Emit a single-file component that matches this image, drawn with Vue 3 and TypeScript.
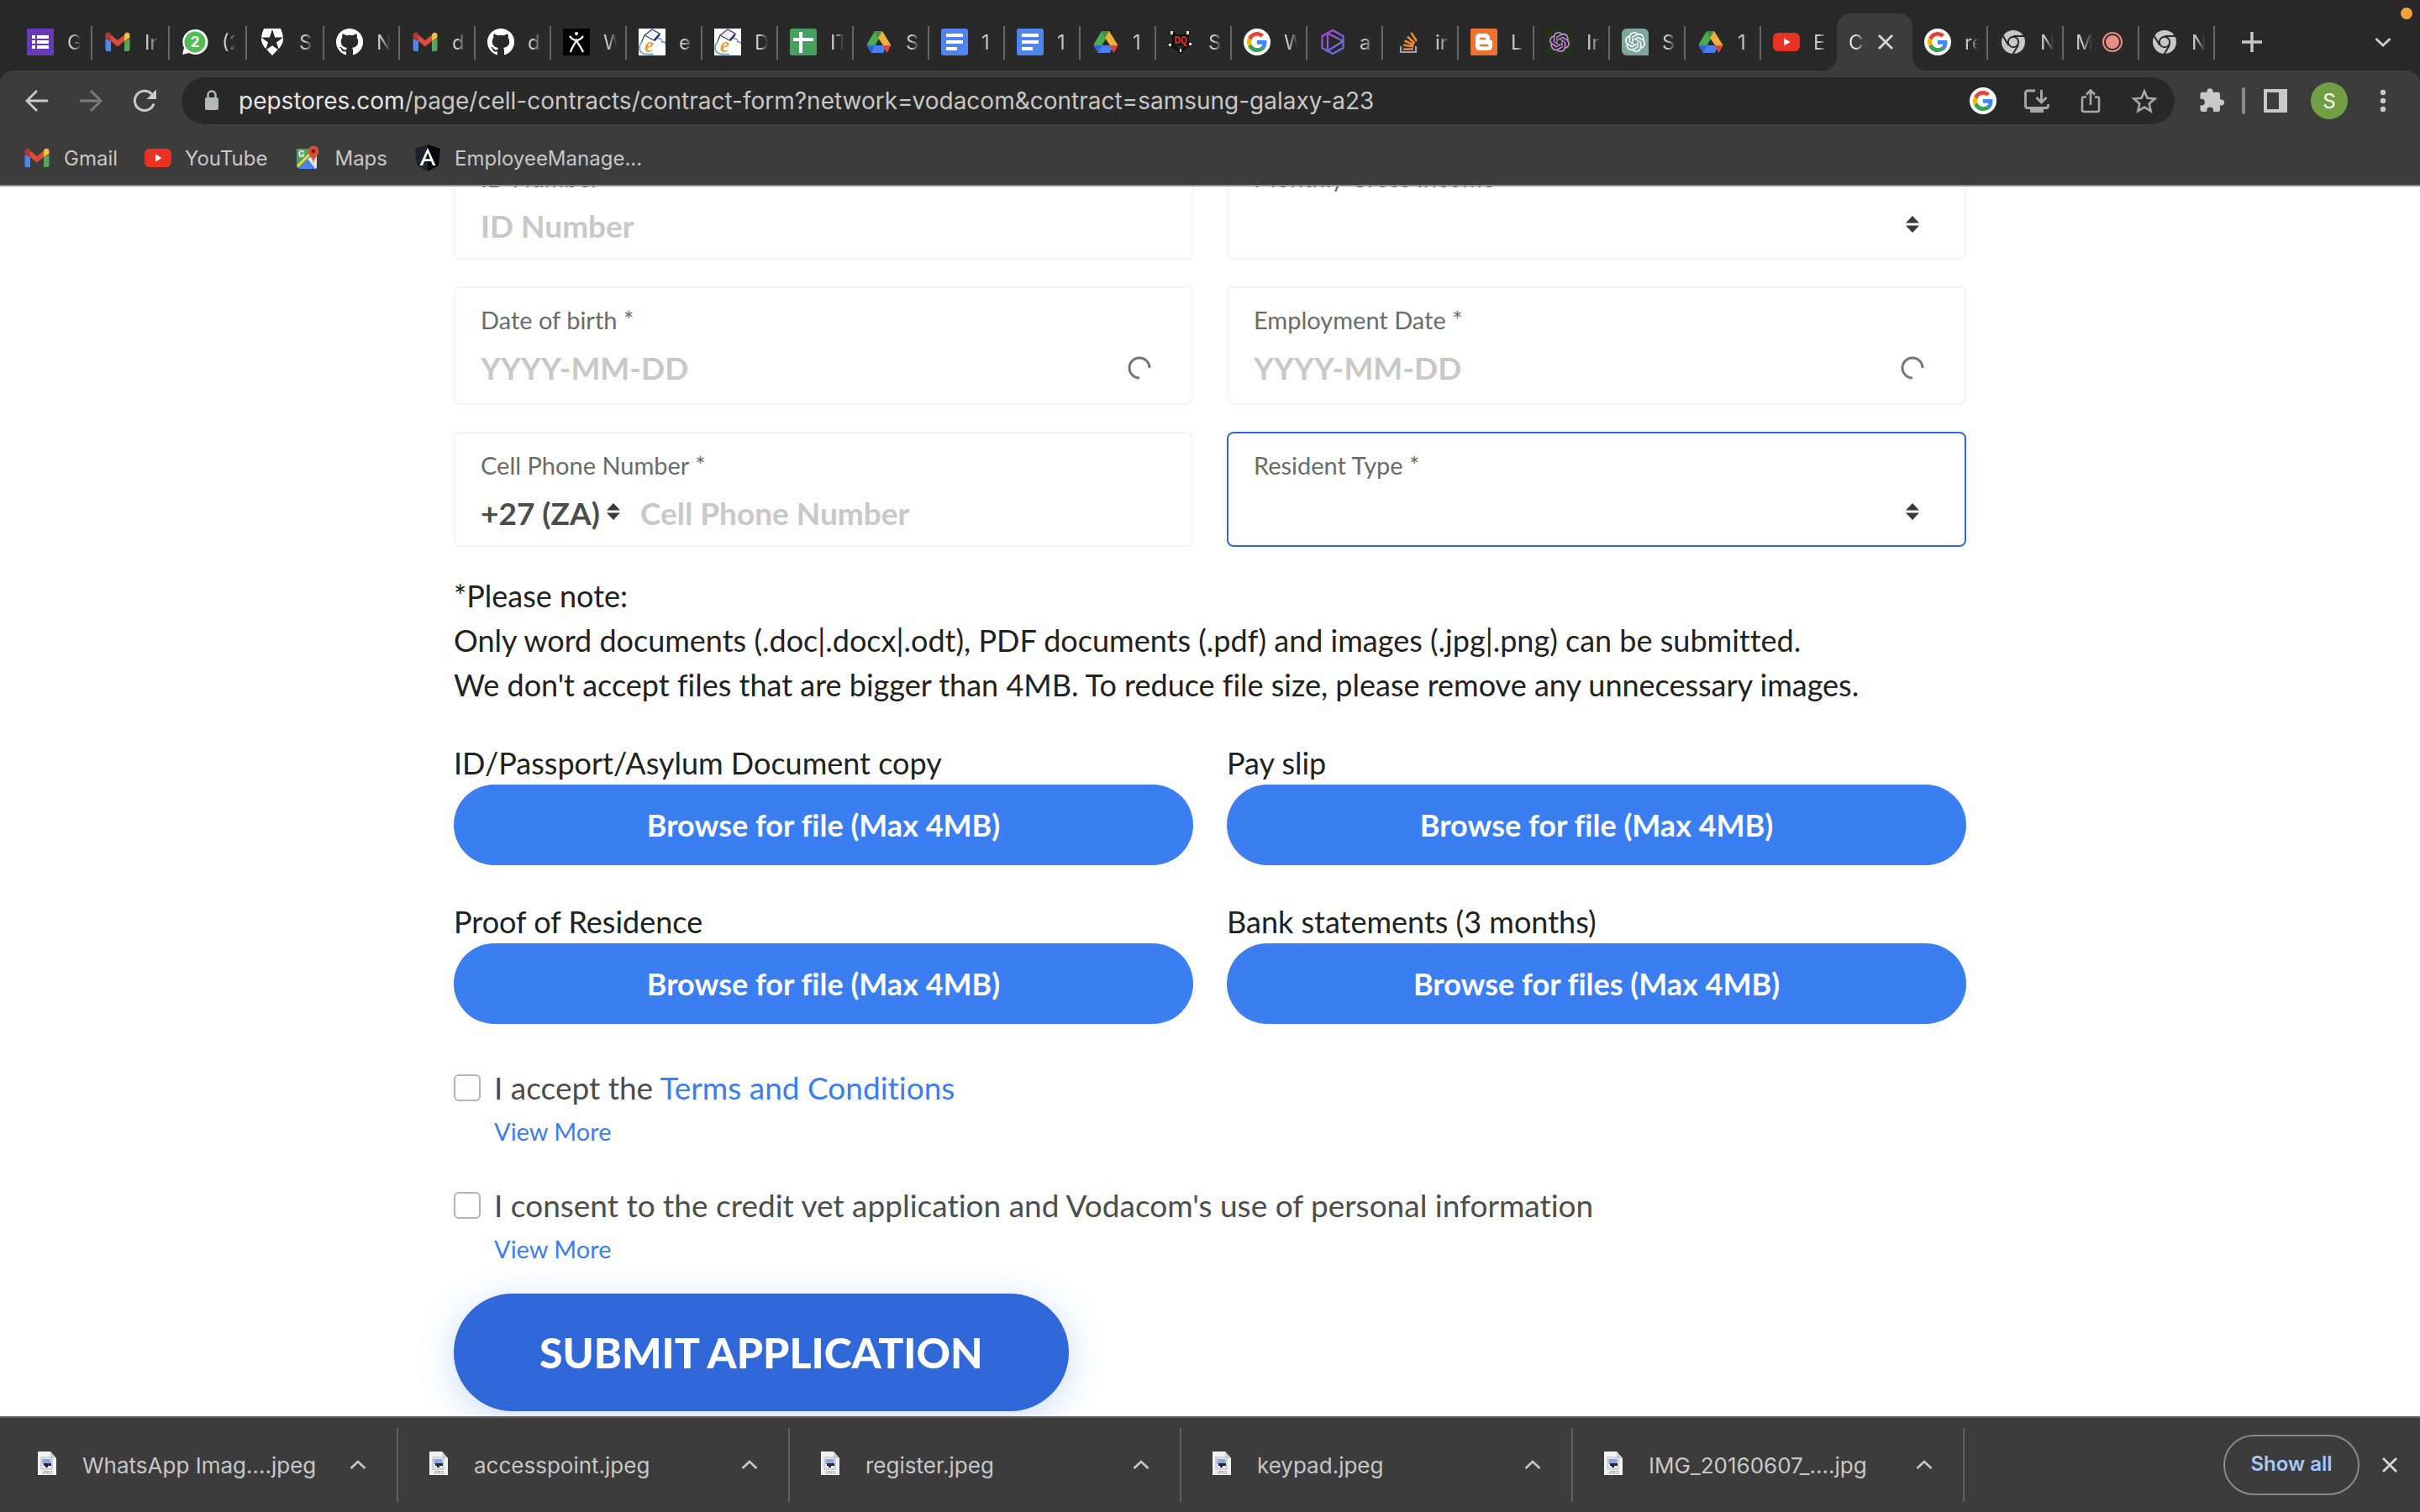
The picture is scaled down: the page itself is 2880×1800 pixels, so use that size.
<script setup lang="ts">
import { ref } from 'vue'

interface Tab {
  icon?: string
  title: string
  wide?: boolean
  active?: boolean
  recording?: boolean
}

const gLogo = `<g transform="translate(4 4)">
    <path fill="#4285f4" d="M23.500 12.300c0-.9-.1-1.600-.2-2.300H12v4.700h6.500a5.600 5.600 0 0 1-2.400 3.600v3h3.900c2.200-2.100 3.500-5.200 3.500-9z"/>
    <path fill="#34a353" d="M12 24c3.200 0 6-1.100 8-2.900l-3.900-3a7.200 7.200 0 0 1-10.800-3.800H1.300v3.100A12 12 0 0 0 12 24z"/>
    <path fill="#f6b704" d="M5.300 14.300a7 7 0 0 1 0-4.600V6.600h-4a12 12 0 0 0 0 10.800z"/>
    <path fill="#e54335" d="M12 4.800c1.800 0 3.300.6 4.600 1.800L20 3.200A12 12 0 0 0 1.300 6.600l4 3.100A7.200 7.200 0 0 1 12 4.800z"/>
  </g>`

const knot = (color: string): string =>
  `<path transform="translate(4 4)" fill="${color}" d="M22.2819 9.8211a5.9847 5.9847 0 0 0-.5157-4.9108 6.0462 6.0462 0 0 0-6.5098-2.9A6.0651 6.0651 0 0 0 4.9807 4.1818a5.9847 5.9847 0 0 0-3.9977 2.9 6.0462 6.0462 0 0 0 .7427 7.0966 5.98 5.98 0 0 0 .511 4.9107 6.051 6.051 0 0 0 6.5146 2.9001A5.9847 5.9847 0 0 0 13.2599 24a6.0557 6.0557 0 0 0 5.7718-4.2058 5.9894 5.9894 0 0 0 3.9977-2.9001 6.0557 6.0557 0 0 0-.7475-7.0729zm-9.022 12.6081a4.4755 4.4755 0 0 1-2.8764-1.0408l.1419-.0804 4.7783-2.7582a.7948.7948 0 0 0 .3927-.6813v-6.7369l2.02 1.1686a.071.071 0 0 1 .038.052v5.5826a4.504 4.504 0 0 1-4.4945 4.4944zm-9.6607-4.1254a4.4708 4.4708 0 0 1-.5346-3.0137l.142.0852 4.783 2.7582a.7712.7712 0 0 0 .7806 0l5.8428-3.3685v2.3324a.0804.0804 0 0 1-.0332.0615L9.74 19.9502a4.4992 4.4992 0 0 1-6.1408-1.6464zM2.3408 7.8956a4.485 4.485 0 0 1 2.3655-1.9728V11.6a.7664.7664 0 0 0 .3879.6765l5.8144 3.3543-2.0201 1.1685a.0757.0757 0 0 1-.071 0l-4.8303-2.7865A4.504 4.504 0 0 1 2.3408 7.872zm16.5963 3.8558L13.1038 8.364 15.1192 7.2a.0757.0757 0 0 1 .071 0l4.8303 2.7913a4.4944 4.4944 0 0 1-.6765 8.1042v-5.6772a.79.79 0 0 0-.407-.667zm2.0107-3.0231l-.142-.0852-4.7735-2.7818a.7759.7759 0 0 0-.7854 0L9.409 9.2297V6.8974a.0662.0662 0 0 1 .0284-.0615l4.8303-2.7866a4.4992 4.4992 0 0 1 6.6802 4.66zM8.3065 12.863l-2.02-1.1638a.0804.0804 0 0 1-.038-.0567V6.0742a4.4992 4.4992 0 0 1 7.3757-3.4537l-.142.0805L8.704 5.459a.7948.7948 0 0 0-.3927.6813zm1.0976-2.3654l2.602-1.4998 2.6069 1.4998v2.9994l-2.5974 1.4997-2.6067-1.4997Z"/>`

const icons: Record<string, string> = {
  forms: `<path fill="#673ab7" d="M0 0h32v32H0z"/><path fill="#fff" d="M6 8h4v4H6zM12 8h14v4H12zM6 14h4v4H6zM12 14h14v4H12zM6 20h4v4H6zM12 20h14v4H12z"/>`,
  gmail: `<path fill="#4f86ec" d="M1.500 12v13a2.500 2.500 0 0 0 2.500 2h4V15z"/><path fill="#58a55c" d="M30.500 12v13a2.500 2.500 0 0 1-2.500 2h-4V15z"/><path fill="#f1bf42" d="M24 7.500V15l6.500-4V8c0-3-3.500-4-5.500-2.400z"/><path fill="#b43a30" d="M8 7.500V15l-6.500-4V8c0-3 3.500-4 5.500-2.400z"/><path fill="#db4b3e" d="M8 7.500l8 6.500 8-6.500V15l-8 6.500L8 15z"/>`,
  whatsapp: `<path fill="#fff" d="M16 1a15 15 0 1 1-7 28L1 31l2-8A15 15 0 0 1 16 1z"/><circle cx="16" cy="16" r="12.500" fill="#52bd5a"/><text x="16" y="22" text-anchor="middle" font-size="17" font-weight="700" font-family="Inter, sans-serif" fill="#fff">2</text>`,
  shield: `<path fill="#fff" d="M6 0h20c3 7 5 15-.5 22L16 32l-9.500-10C1 15 3 7 6 0z"/><path fill="#292929" d="M16 1l3.200 9.500H29l-8 6 3.200 9.500L16 20.200 7.800 26 11 16.500l-8-6h9.800z"/>`,
  github: `<path fill="#fff" d="M16 0a16 16 0 0 0-5 31.200c.8.1 1-.4 1-.8v-3c-4.400 1-5.400-2-5.400-2-.7-1.800-1.700-2.300-1.700-2.300-1.500-1 .1-1 .1-1 1.600.1 2.500 1.700 2.500 1.700 1.400 2.400 3.700 1.700 4.600 1.300.1-1 .6-1.700 1-2.100-3.500-.4-7.300-1.800-7.300-7.900 0-1.700.6-3.200 1.700-4.300-.2-.4-.7-2 .1-4.200 0 0 1.400-.4 4.400 1.600a15 15 0 0 1 8 0c3-2 4.400-1.600 4.400-1.600.9 2.200.3 3.800.2 4.200a6.200 6.200 0 0 1 1.600 4.300c0 6.100-3.700 7.500-7.300 7.900.6.500 1.100 1.500 1.100 3v4.400c0 .4.300.9 1.100.8A16 16 0 0 0 16 0z"/>`,
  figure: `<path fill="#000" d="M0 0h32v32H0z"/><circle cx="16" cy="6" r="2" fill="#fff"/><path d="M8 9c3 4 6 5 8 5s5-1 8-5M9 28c1-5 4-8 7-14 3 6 6 9 8 14" fill="none" stroke="#fff" stroke-width="2.200"/>`,
  scholar: `<rect width="32" height="32" fill="#fff"/><path d="M7 8l9-7 9 5-7 8z" fill="#eef0f6" stroke="#3a4470" stroke-width="1.300"/><path fill="#1f2a50" d="M18 14l7-8 .5 2-6 7z"/><path d="M7 8L4 15" stroke="#3a4470" stroke-width="1.300"/><path d="M5 15c-5 4-5 11-1 14 2 2 8 1.500 14 1.500M22 12c4-1 6 1 6 4 2-1 3 0 4 2" stroke="#4d94cc" stroke-width="1.400" fill="none"/><text x="7" y="28" font-size="25" font-style="italic" font-weight="700" font-family="Liberation Serif, serif" fill="#e0a440">e</text>`,
  sheets: `<rect width="32" height="32" rx="3" fill="#48a060"/><path fill="#fff" d="M11 4h4v7h13v4H15v14h-4V15H4v-4h7z"/>`,
  drive: `<path fill="#4caa50" d="M11 3l5 9-9 16L1.500 19z"/><path fill="#3f8f45" d="M11 3h9l-4 9z"/><path fill="#f0b03c" d="M20 3l10.500 17H21l-6-9z"/><path fill="#4b80ec" d="M7 20h18l-4 9H7l-5-8z"/><path fill="#2f64d6" d="M1.500 20h10L7 29z"/><path fill="#db4a38" d="M20.500 20h10L25.500 29z"/>`,
  docs: `<rect width="32" height="32" rx="3" fill="#5085ee"/><path fill="#fff" d="M6 6h20v4H6zM6 14h20v4H6zM6 22h13v4H6z"/>`,
  dq: `<path fill="none" stroke="#111" stroke-width="3.500" d="M4 4l6 5h10l5-5M3 19l5 3 7 6 6-6 6-3"/><path fill="#141010" d="M5 7h20v13H5z"/><text x="15" y="18" text-anchor="middle" font-size="13" font-weight="700" font-family="Liberation Mono, monospace" fill="#d22f2f">DQ</text><path fill="#ddd" d="M3 3h3v4H3zM22 3h3v4h-3zM1 18h3v3H1zM25 17h3v3h-3zM14 24h2v4h-2z"/>`,
  google: `<circle cx="16" cy="16" r="16" fill="#fff"/>${gLogo}`,
  hexagon: `<defs><linearGradient id="hex" x1="0" y1="0" x2="1" y2="1"><stop offset="0" stop-color="#b943d8"/><stop offset="1" stop-color="#4b80dd"/></linearGradient></defs><path fill="none" stroke="url(#hex)" stroke-width="2.200" d="M16 2l12.500 7v14L16 30 3.500 23V9zM10 5.500v21L28.500 15 10 5.500"/>`,
  stack: `<path d="M7 21v7h18v-7" fill="none" stroke="#9aa4ad" stroke-width="2.200"/><g stroke="#e8873a" stroke-width="2.600"><path d="M10 24.500h12M10.200 19.500l12 2M11.500 14.500l11.200 5M15 9.500l8.500 8M19.500 5l6.500 10"/></g>`,
  blogger: `<rect width="32" height="32" rx="2" fill="#ee7330"/><path fill="#fff" d="M11 6h6c4 0 6 2 6 5.500 0 2 .5 2.500 1.500 2.500 1 0 1.500.5 1.500 1.500V21c0 3-2 5-5 5H11c-3 0-5-2-5-5V11c0-3 2-5 5-5z"/><path d="M12 12h5M12 20h8" stroke="#ee7330" stroke-width="2.600" stroke-linecap="round"/>`,
  openai: `<path fill="#1f3317" d="M0 0h32v32H0z"/>${knot('#d884ef')}`,
  chatgpt: `<path fill="#7fa89c" d="M6 0h20a6 6 0 0 1 6 6v26H6a6 6 0 0 1-6-6V6a6 6 0 0 1 6-6z"/>${knot('#fff')}`,
  youtube: `<rect x="0" y="5" width="32" height="22" rx="6" fill="#e93223"/><path fill="#fff" d="M13 11.500l7.500 4.500-7.500 4.500z"/>`,
  chrome: `<circle cx="16" cy="16" r="14" fill="#c7c7c7"/><circle cx="16" cy="16" r="6.200" fill="#c7c7c7" stroke="#292929" stroke-width="2"/><path d="M16 9h13M10 19.500L3.500 8.500M22 19.500L15.500 30.500" stroke="#292929" stroke-width="2"/>`,
  record: `<circle cx="16" cy="16" r="11" fill="none" stroke="#e88d84" stroke-width="2"/><circle cx="16" cy="16" r="8" fill="#e88d84"/>`,
  close: `<path d="M8 8l16 16M24 8L8 24" stroke="#d6d6d6" stroke-width="2.800"/>`,
  plus: `<path d="M16 4v24M4 16h24" stroke="#c9c9c9" stroke-width="3.400"/>`,
  chevron: `<path d="M7.500 12l8.500 8 8.500-8" fill="none" stroke="#c9c9c9" stroke-width="3"/>`,
  caret: `<path d="M7.500 20l8.500-8 8.500 8" fill="none" stroke="#c9c9c9" stroke-width="2.600"/>`,
  back: `<path d="M29 16H4M16 4L4 16l12 12" fill="none" stroke="#c9c9c9" stroke-width="2.800"/>`,
  forward: `<path d="M3 16h25M16 4l12 12-12 12" fill="none" stroke="#7d7d7d" stroke-width="2.800"/>`,
  reload: `<path d="M27 19.500A11.600 11.600 0 1 1 24.500 8" fill="none" stroke="#c9c9c9" stroke-width="3"/><path fill="#c9c9c9" d="M30 2.500v11.500H18.500z"/>`,
  lock: `<rect x="8" y="12" width="16" height="15" rx="2" fill="#b4b8bd"/><path d="M11.500 13v-4a4.500 4.500 0 0 1 9 0v4" fill="none" stroke="#b4b8bd" stroke-width="2.400"/>`,
  install: `<path d="M14 4H5a2.500 2.500 0 0 0-2.500 2.500V22A2.500 2.500 0 0 0 5 24.500h22a2.500 2.500 0 0 0 2.500-2.500v-2" fill="none" stroke="#a8a8a8" stroke-width="2.800"/><path d="M21.500 3v14M15.500 12l6 6 6-6" fill="none" stroke="#a8a8a8" stroke-width="2.800"/><path fill="#a8a8a8" d="M8 25h16v5H8z"/>`,
  share: `<path d="M11 11.500H8A2 2 0 0 0 6 13.500V27a2 2 0 0 0 2 2h16a2 2 0 0 0 2-2V13.500a2 2 0 0 0-2-2h-3M16 21V4M11 8.500l5-5 5 5" fill="none" stroke="#a8a8a8" stroke-width="2.600"/>`,
  star: `<path d="M16 4.500l3.500 8.300 9 .8-6.800 5.900 2 8.800-7.700-4.700-7.700 4.700 2-8.800-6.800-5.900 9-.8z" fill="none" stroke="#a8a8a8" stroke-width="2.600"/>`,
  puzzle: `<path fill="#c9c9c9" d="M27.500 14.500H26v-6A2.800 2.800 0 0 0 23.200 5.700H17.500V4a3.600 3.600 0 0 0-7 0v1.700H5.300A2.800 2.800 0 0 0 2.500 8.500v5.200H4a3.900 3.900 0 0 1 0 7.800H2.500v5A2.800 2.800 0 0 0 5.300 29h5v-1.500a3.900 3.900 0 0 1 7.800 0V29h5.100a2.800 2.800 0 0 0 2.800-2.800v-4.700h1.500a3.500 3.500 0 0 0 0-7z"/>`,
  panel: `<path fill="#c9c9c9" fill-rule="evenodd" d="M2 2h28v28H2zM6 6v20h14V6z"/>`,
  dots: `<g fill="#c9c9c9"><circle cx="16" cy="6" r="3.200"/><circle cx="16" cy="16" r="3.200"/><circle cx="16" cy="26" r="3.200"/></g>`,
  maps: `<path fill="#4fa65a" d="M3 5h18v23H5a2 2 0 0 1-2-2z"/><path fill="#4d83ea" d="M5 29l11-11 11 11z"/><path fill="#e8e8e8" d="M16 17l11-6v16a2 2 0 0 1-1.500 2z"/><path stroke="#f4d04b" stroke-width="3" d="M4 26L21 9"/><text x="5" y="15" font-size="10" font-weight="700" font-family="Inter, sans-serif" fill="#fff">G</text><path fill="#d5503f" d="M23 1.500a6.500 6.500 0 0 1 6.500 6.500c0 5-5 6-6.500 14-1.500-8-6.500-9-6.500-14A6.500 6.500 0 0 1 23 1.500z"/><circle cx="23" cy="8" r="2.400" fill="#7c2019"/>`,
  angular: `<path fill="#1d222b" d="M16 0L1 5l2 20 13 7z"/><path fill="#05070c" d="M16 0l15 5-2 20-13 7z"/><path fill="#fff" fill-rule="evenodd" d="M16 4l9.500 21H22l-2-5h-8l-2 5H6.500zM16 10l-3 7.200h6z"/>`,
  jpeg: `<path fill="#f2f2f2" d="M5 0h15l7 8v20H5z"/><path fill="#cfcfcf" d="M20 0l7 8h-7z"/><rect x="9" y="7" width="13" height="14" fill="#e4e9f1" stroke="#b5b5b5"/><path fill="#86a8e6" d="M10.500 9h10v6h-10z"/><path fill="#23283a" d="M12 14h9v3h-4v2h-3v-2h-2z"/><text x="16" y="27" text-anchor="middle" font-size="5" font-family="Inter, sans-serif" fill="#888">JPEG</text>`,
  sort: `<path fill="#343a40" d="M8 13.500L16 5l8 8.500zM8 16.500h16L16 25z"/>`,
  spinner: `<path d="M28 17A12 12 0 1 0 16 29" fill="none" stroke="#777" stroke-width="3"/>`,
}

const tabs: Tab[] = [
  { icon: 'forms', title: 'G', wide: true },
  { icon: 'gmail', title: 'In', wide: true },
  { icon: 'whatsapp', title: '(2', wide: true },
  { icon: 'shield', title: 'S', wide: true },
  { icon: 'github', title: 'N' },
  { icon: 'gmail', title: 'd' },
  { icon: 'github', title: 'd' },
  { icon: 'figure', title: 'W' },
  { icon: 'scholar', title: 'e' },
  { icon: 'scholar', title: 'D' },
  { icon: 'sheets', title: 'IT' },
  { icon: 'drive', title: 'S' },
  { icon: 'docs', title: '1' },
  { icon: 'docs', title: '1' },
  { icon: 'drive', title: '1' },
  { icon: 'dq', title: 'S' },
  { icon: 'google', title: 'W' },
  { icon: 'hexagon', title: 'a' },
  { icon: 'stack', title: 'in' },
  { icon: 'blogger', title: 'L' },
  { icon: 'openai', title: 'In' },
  { icon: 'chatgpt', title: 'S' },
  { icon: 'drive', title: '1' },
  { icon: 'youtube', title: 'E' },
  { title: 'Co', active: true },
  { icon: 'google', title: 're' },
  { icon: 'chrome', title: 'N' },
  { title: 'M', recording: true },
  { icon: 'chrome', title: 'N' },
]

const bookmarks = [
  { icon: 'gmail', label: 'Gmail' },
  { icon: 'youtube', label: 'YouTube' },
  { icon: 'maps', label: 'Maps' },
  { icon: 'angular', label: 'EmployeeManage...' },
]

const uploads = [
  { id: 'id-copy', label: 'ID/Passport/Asylum Document copy', action: 'Browse for file (Max 4MB)' },
  { id: 'pay-slip', label: 'Pay slip', action: 'Browse for file (Max 4MB)' },
  { id: 'residence', label: 'Proof of Residence', action: 'Browse for file (Max 4MB)' },
  { id: 'bank', label: 'Bank statements (3 months)', action: 'Browse for files (Max 4MB)' },
]

const downloads = [
  'WhatsApp Imag....jpeg',
  'accesspoint.jpeg',
  'register.jpeg',
  'keypad.jpeg',
  'IMG_20160607_....jpg',
]

const accepted = ref(false)
const consented = ref(false)
</script>

<template>
  <div class="browser">
    <header>
      <nav class="tabstrip" aria-label="Tabs">
        <div
          v-for="(tab, i) in tabs"
          :key="i"
          class="tab"
          :class="{ wide: tab.wide, active: tab.active, plain: tab.active || tabs[i + 1]?.active }"
        >
          <svg v-if="tab.icon" class="icon" viewBox="0 0 32 32" v-html="icons[tab.icon]" />
          <span class="tab-title" :class="{ roomy: !tab.icon }">{{ tab.title }}</span>
          <button v-if="tab.active" class="icon-button" aria-label="Close tab">
            <svg class="icon" viewBox="0 0 32 32" v-html="icons.close" />
          </button>
          <svg v-if="tab.recording" class="icon" viewBox="0 0 32 32" v-html="icons.record" />
        </div>
        <button class="icon-button new-tab" aria-label="New tab">
          <svg class="icon" viewBox="0 0 32 32" v-html="icons.plus" />
        </button>
        <button class="icon-button tab-search" aria-label="Search tabs">
          <svg class="icon" viewBox="0 0 32 32" v-html="icons.chevron" />
        </button>
        <span class="mic-dot"></span>
      </nav>

      <div class="toolbar">
        <button class="icon-button" aria-label="Back"><svg class="icon" viewBox="0 0 32 32" v-html="icons.back" /></button>
        <button class="icon-button" aria-label="Forward"><svg class="icon" viewBox="0 0 32 32" v-html="icons.forward" /></button>
        <button class="icon-button" aria-label="Reload"><svg class="icon" viewBox="0 0 32 32" v-html="icons.reload" /></button>
        <div class="omnibox">
          <svg class="icon" viewBox="0 0 32 32" v-html="icons.lock" />
          <div class="url"><span class="host">pepstores.com</span>/page/cell-contracts/contract-form?network=vodacom&amp;contract=samsung-galaxy-a23</div>
          <button
            v-for="name in ['google', 'install', 'share', 'star']"
            :key="name"
            class="icon-button"
            :aria-label="name"
          >
            <svg class="icon" viewBox="0 0 32 32" v-html="icons[name]" />
          </button>
        </div>
        <div class="actions">
          <button class="icon-button" aria-label="Extensions"><svg class="icon" viewBox="0 0 32 32" v-html="icons.puzzle" /></button>
          <span class="divider"></span>
          <button class="icon-button" aria-label="Side panel"><svg class="icon" viewBox="0 0 32 32" v-html="icons.panel" /></button>
          <button class="avatar">S</button>
          <button class="icon-button" aria-label="Menu"><svg class="icon" viewBox="0 0 32 32" v-html="icons.dots" /></button>
        </div>
      </div>

      <nav class="bookmarks" aria-label="Bookmarks">
        <a v-for="b in bookmarks" :key="b.label" href="#" class="bookmark">
          <svg class="icon" viewBox="0 0 32 32" v-html="icons[b.icon]" />
          <span>{{ b.label }}</span>
        </a>
      </nav>
    </header>

    <main class="page">
      <form class="form" @submit.prevent>
        <div class="fields">
          <div class="field">
            <label for="id-number">ID Number *</label>
            <input id="id-number" type="text" placeholder="ID Number" />
          </div>
          <div class="field">
            <label for="income">Monthly Gross Income *</label>
            <div class="control">
              <select id="income"><option></option></select>
              <svg class="icon" viewBox="0 0 32 32" v-html="icons.sort" />
            </div>
          </div>
          <div class="field date">
            <label for="birth">Date of birth *</label>
            <div class="control">
              <input id="birth" type="text" placeholder="YYYY-MM-DD" />
              <svg class="icon" viewBox="0 0 32 32" v-html="icons.spinner" />
            </div>
          </div>
          <div class="field date">
            <label for="employed">Employment Date *</label>
            <div class="control">
              <input id="employed" type="text" placeholder="YYYY-MM-DD" />
              <svg class="icon" viewBox="0 0 32 32" v-html="icons.spinner" />
            </div>
          </div>
          <div class="field">
            <label for="phone">Cell Phone Number *</label>
            <div class="control">
              <select class="country" aria-label="Country code"><option>+27 (ZA)</option></select>
              <svg class="icon" viewBox="0 0 32 32" v-html="icons.sort" />
              <input id="phone" class="phone" type="tel" placeholder="Cell Phone Number" />
            </div>
          </div>
          <div class="field focused">
            <label for="resident">Resident Type *</label>
            <div class="control">
              <select id="resident"><option></option></select>
              <svg class="icon" viewBox="0 0 32 32" v-html="icons.sort" />
            </div>
          </div>
        </div>

        <p class="note">
          *Please note:<br />
          Only word documents (.doc|.docx|.odt), PDF documents (.pdf) and images (.jpg|.png) can be submitted.<br />
          We don't accept files that are bigger than 4MB. To reduce file size, please remove any unnecessary images.
        </p>

        <div class="uploads">
          <div v-for="u in uploads" :key="u.id" class="upload">
            <label :for="u.id">{{ u.label }}</label>
            <button :id="u.id" type="button">{{ u.action }}</button>
          </div>
        </div>

        <div class="consents">
          <div class="consent">
            <input id="terms" v-model="accepted" type="checkbox" />
            <div>
              <div class="consent-text"><label for="terms">I accept the </label><a href="#">Terms and Conditions</a></div>
              <a href="#" class="more">View More</a>
            </div>
          </div>
          <div class="consent">
            <input id="vet" v-model="consented" type="checkbox" />
            <div>
              <div class="consent-text"><label for="vet">I consent to the credit vet application and Vodacom's use of personal information</label></div>
              <a href="#" class="more">View More</a>
            </div>
          </div>
        </div>

        <button class="submit" type="submit">SUBMIT APPLICATION</button>
      </form>
    </main>

    <footer class="shelf">
      <div v-for="name in downloads" :key="name" class="download">
        <svg class="icon" viewBox="0 0 32 32" v-html="icons.jpeg" />
        <span class="file">{{ name }}</span>
        <button class="icon-button" aria-label="Options"><svg class="icon" viewBox="0 0 32 32" v-html="icons.caret" /></button>
      </div>
      <button class="show-all">Show all</button>
      <button class="icon-button" aria-label="Close downloads"><svg class="icon" viewBox="0 0 32 32" v-html="icons.close" /></button>
    </footer>
  </div>
</template>

<style>
html,
body {
  margin: 0;
}
</style>

<style scoped>
.browser {
  display: flex;
  flex-direction: column;
  height: 100vh;
  overflow: hidden;
  background: #fefefe;
  color: #c7c7c7;
  font-family: Inter, "Noto Sans", sans-serif;
  font-size: 24px;
}
.browser * {
  box-sizing: border-box;
}
button {
  border: 0;
  padding: 0;
  background: none;
  color: inherit;
  font: inherit;
}
a {
  text-decoration: none;
}
.icon {
  display: block;
  flex: none;
  width: 32px;
  height: 32px;
}
.icon-button {
  flex: none;
}

.tabstrip {
  position: relative;
  display: flex;
  align-items: center;
  height: 84px;
  padding: 16px 28px 0 18px;
  background: #292929;
}
.tab {
  position: relative;
  display: flex;
  align-items: center;
  gap: 16px;
  flex: none;
  width: 90px;
  height: 68px;
  padding-left: 14px;
}
.tab.wide {
  width: 92px;
}
.tab:not(.plain)::after {
  content: "";
  position: absolute;
  right: 0;
  top: 15px;
  width: 2px;
  height: 40px;
  background: #666;
}
.tab-title {
  width: 16px;
  overflow: hidden;
  white-space: nowrap;
  mask-image: linear-gradient(to right, #000 40%, transparent);
}
.tab-title.roomy {
  width: 20px;
}
.tab:has(.roomy) {
  gap: 8px;
}
.tab.active {
  border-radius: 16px 16px 0 0;
  background: #3c3c3c;
  color: #e3e3e3;
}
.tab.active::before,
.tab.active::after {
  content: "";
  position: absolute;
  bottom: 0;
  width: 16px;
  height: 16px;
}
.tab.active::before {
  right: 100%;
  background: radial-gradient(circle at 0 0, transparent 16px, #3c3c3c 16px);
}
.tab.active::after {
  left: 100%;
  background: radial-gradient(circle at 100% 0, transparent 16px, #3c3c3c 16px);
}
.new-tab {
  margin-left: 28px;
}
.tab-search {
  margin-left: auto;
}
.mic-dot {
  position: absolute;
  top: 9px;
  right: 9px;
  width: 14px;
  height: 14px;
  border-radius: 50%;
  background: #f2a33c;
}

header {
  flex: none;
  border-bottom: 2px solid #8f8f8f;
  background: #292929;
}
.toolbar {
  display: flex;
  align-items: center;
  gap: 32px;
  height: 72px;
  padding: 0 28px;
  border-radius: 16px 16px 0 0;
  background: #3c3c3c;
}
.omnibox {
  display: flex;
  align-items: center;
  gap: 32px;
  flex: 1;
  height: 56px;
  margin: 0 -4px;
  padding: 0 20px;
  border-radius: 28px;
  background: #292929;
}
.url {
  flex: 1;
  margin-left: -16px;
  overflow: hidden;
  white-space: nowrap;
  font-size: 28px;
}
.host {
  color: #e6e6e6;
}
.actions {
  display: flex;
  align-items: center;
  gap: 20px;
}
.divider {
  width: 4px;
  height: 32px;
  border-radius: 2px;
  background: #8a8a8a;
}
.avatar {
  width: 44px;
  height: 44px;
  margin: 0 6px;
  border-radius: 50%;
  background: #729f45;
  color: #fff;
}
.bookmarks {
  display: flex;
  align-items: center;
  gap: 32px;
  height: 64px;
  padding: 0 28px;
  background: #3c3c3c;
}
.bookmark {
  display: flex;
  align-items: center;
  gap: 16px;
  color: #c7c7c7;
}

.page {
  flex: 1;
  min-height: 0;
  overflow: hidden;
  color: #212121;
  font-family: Lato, "Open Sans", sans-serif;
  font-size: 36px;
  font-variant-ligatures: none;
}
.form {
  width: 62.5%;
  margin: -50px auto 0;
}
.fields,
.uploads {
  display: grid;
  grid-template-columns: 1fr 1fr;
  gap: 32px 40px;
}
.field {
  display: flex;
  flex-direction: column;
  gap: 16px;
  padding: 22px 46px 15px 30px;
  border: 2px solid #f4f4f4;
  border-radius: 8px;
}
.field.date {
  padding-bottom: 19px;
}
.field.focused {
  border-color: #2f69d9;
}
.field label {
  color: #6b6b6b;
  font-size: 29px;
  line-height: 32px;
}
.control {
  display: flex;
  align-items: center;
}
.field input,
.field select {
  flex: 1;
  min-width: 0;
  height: 48px;
  padding: 0;
  border: 0;
  outline: 0;
  appearance: none;
  background: none;
  color: #4d4d4d;
  font-family: inherit;
  font-size: 37px;
  font-weight: 700;
}
.field input::placeholder {
  color: #c8c8c8;
}
.field .country {
  flex: none;
}
.field .phone {
  margin-left: 16px;
}
.note {
  margin: 32px 0 40px;
  line-height: 53px;
}
.uploads {
  row-gap: 41px;
}
.upload {
  display: flex;
  flex-direction: column;
}
.upload label {
  line-height: 52px;
}
.upload button {
  height: 96px;
  border-radius: 48px;
  background: #3b7ef2;
  color: #fff;
  font-weight: 700;
}
.consents {
  display: flex;
  flex-direction: column;
  gap: 40px;
  margin: 52px 0 29px;
}
.consent {
  display: flex;
  align-items: flex-start;
  gap: 16px;
}
.consent input {
  width: 32px;
  height: 32px;
  margin: 8px 0;
  border: 2px solid #adb5bd;
  border-radius: 6px;
  appearance: none;
}
.consent-text {
  color: #4d4d4d;
  font-size: 37px;
  line-height: 48px;
}
.consent a {
  color: #3b7ef2;
}
.consent .more {
  display: block;
  margin-top: 4px;
  font-size: 29px;
  line-height: 48px;
}
.submit {
  height: 140px;
  padding: 0 102px;
  border-radius: 70px;
  background: #3068da;
  box-shadow: 0 8px 40px rgba(59, 126, 242, 0.25);
  color: #fff;
  font-size: 50px;
  font-weight: 900;
}

.shelf {
  display: flex;
  align-items: center;
  flex: none;
  height: 114px;
  padding: 0 20px 0 8px;
  border-top: 2px solid #5f5f5f;
  background: #3c3c3c;
}
.download {
  display: flex;
  align-items: center;
  gap: 26px;
  flex: none;
  width: 466px;
  height: 88px;
  padding: 0 30px 0 32px;
  border-right: 2px solid #5f5f5f;
}
.file {
  flex: 1;
  font-size: 26px;
}
.show-all {
  width: 162px;
  height: 72px;
  margin: 0 20px 0 auto;
  padding-bottom: 4px;
  border: 2px solid #8a8a8a;
  border-radius: 36px;
  color: #a8c7fa;
  font-weight: 600;
}
</style>
